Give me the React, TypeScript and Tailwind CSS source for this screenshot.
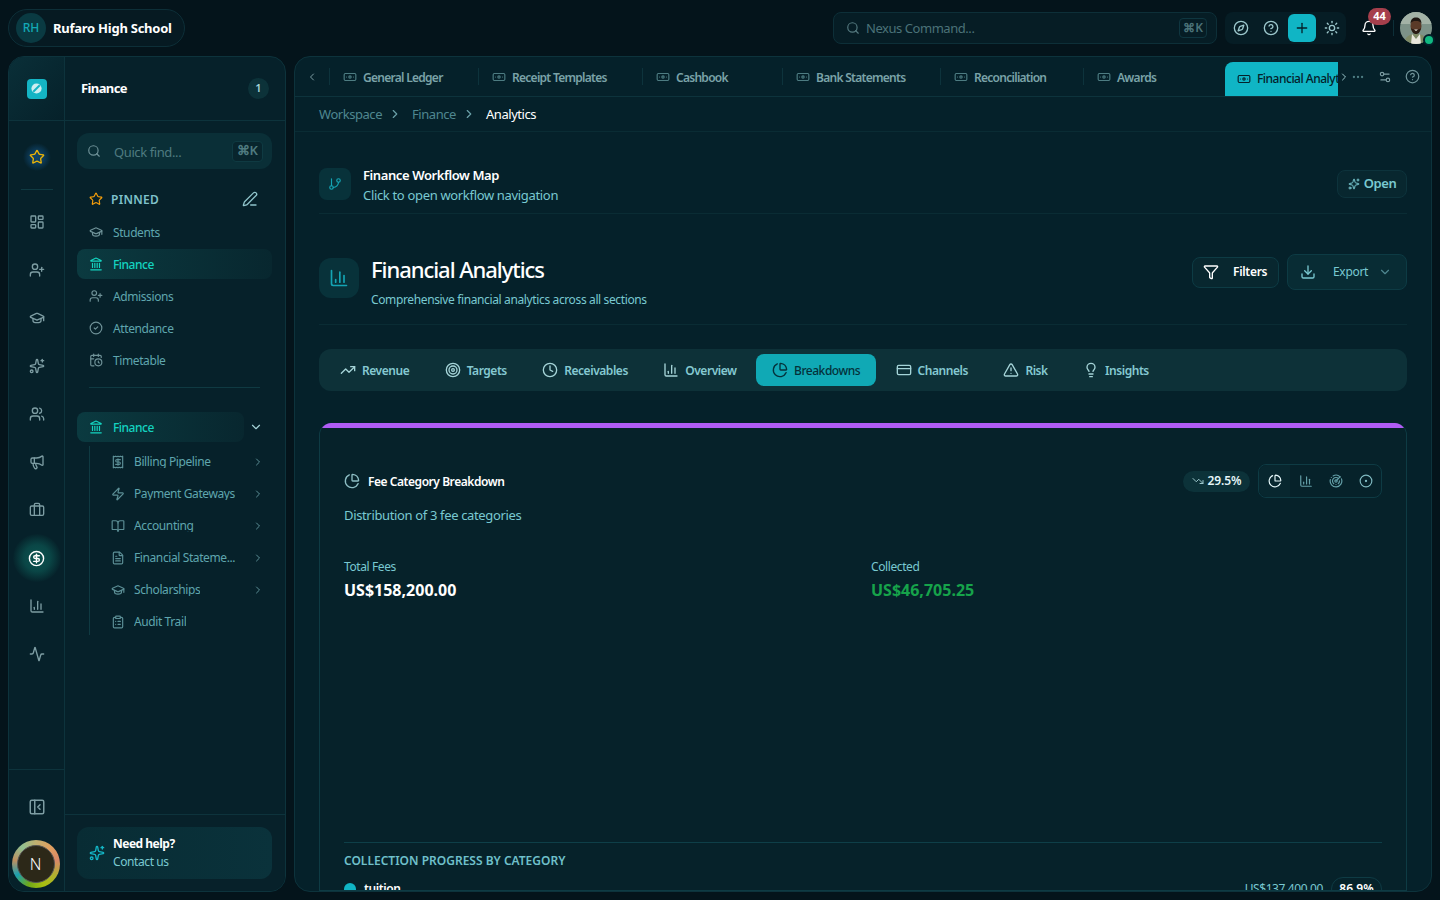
import {
  Activity, Banknote, Bell, BookOpen, Briefcase, CalendarClock, ChartColumn, ChartPie, ChevronDown, ChevronLeft, ChevronRight,
  CircleCheck, CircleDollarSign, CircleDot, CircleHelp, ClipboardList, Clock, Compass, CreditCard, Download, Ellipsis, FileText, Funnel,
  GitBranch, GraduationCap, Landmark, LayoutDashboard, Lightbulb, Megaphone, PanelLeftClose, PenLine, Plus, Radar, Receipt, Search,
  Settings2, Sparkles, Star, Sun, Target, TrendingDown, TrendingUp, TriangleAlert, UserPlus, Users, Zap,
} from "lucide-react";

const railIcons = [LayoutDashboard, UserPlus, GraduationCap, Sparkles, Users, Megaphone, Briefcase];

const pinned = [
  { label: "Students", icon: GraduationCap },
  { label: "Finance", icon: Landmark, active: true },
  { label: "Admissions", icon: UserPlus },
  { label: "Attendance", icon: CircleCheck },
  { label: "Timetable", icon: CalendarClock },
];

const financeItems = [
  { label: "Billing Pipeline", icon: Receipt, more: true },
  { label: "Payment Gateways", icon: Zap, more: true },
  { label: "Accounting", icon: BookOpen, more: true },
  { label: "Financial Stateme...", icon: FileText, more: true },
  { label: "Scholarships", icon: GraduationCap, more: true },
  { label: "Audit Trail", icon: ClipboardList },
];

const pageTabs = [
  { label: "General Ledger", w: "w-[149px]" },
  { label: "Receipt Templates", w: "w-[164px]" },
  { label: "Cashbook", w: "w-[140px]" },
  { label: "Bank Statements", w: "w-[158px]" },
  { label: "Reconciliation", w: "w-[143px]" },
  { label: "Awards", w: "w-[142px]" },
];

const sections = [
  { label: "Revenue", icon: TrendingUp },
  { label: "Targets", icon: Target },
  { label: "Receivables", icon: Clock },
  { label: "Overview", icon: ChartColumn },
  { label: "Breakdowns", icon: ChartPie, active: true },
  { label: "Channels", icon: CreditCard },
  { label: "Risk", icon: TriangleAlert },
  { label: "Insights", icon: Lightbulb },
];

function TopBar() {
  return (
    <header className="h-[56px] shrink-0 flex items-center pl-2 pr-2">
      <div className="h-[38px] w-[177px] rounded-full border border-[#0d2f38] bg-[#061a22] flex items-center pl-[7px] gap-[7px]">
        <div className="w-[30px] h-[30px] rounded-full bg-[#0a3a42] flex items-center justify-center text-[12px] font-medium text-[#13a9b5]">RH</div>
        <span className="pt-[1px] text-[13px] font-bold text-white tracking-[-0.25px]">Rufaro High School</span>
      </div>

      <div className="ml-auto h-[32px] w-[384px] rounded-lg border border-[#0d2f38] bg-[#061d25] flex items-center pl-3 pr-[9px]">
        <Search className="w-[14px] h-[14px] text-[#54797f]" />
        <span className="ml-[6px] pt-[1px] text-[13px] tracking-[-0.45px] text-[#4b7278]">Nexus Command...</span>
        <span className="ml-auto h-[20px] px-[3px] rounded border border-[#0f3640] flex items-center text-[12px] font-semibold text-[#4b7278]">⌘K</span>
      </div>

      <div className="ml-2 h-[32px] w-[121px] rounded-lg bg-[#061d25] flex items-center pl-2 gap-[8px]">
        <Compass className="w-[16px] h-[16px] text-[#9cc7cc]" />
        <CircleHelp className="w-[16px] h-[16px] ml-[6px] text-[#9cc7cc]" />
        <div className="w-[28px] h-[28px] ml-[1px] rounded-md bg-[#10b5c5] flex items-center justify-center">
          <Plus className="w-[16px] h-[16px] text-[#04212a]" />
        </div>
        <Sun className="w-[16px] h-[16px] text-[#9cc7cc]" />
      </div>

      <div className="relative ml-[15px] w-[16px] h-[16px]">
        <Bell className="w-[16px] h-[16px] text-white" />
        <span className="absolute -top-[12px] -right-[14px] w-[23px] h-[17px] rounded-full bg-[#a63f4c] text-white text-[11px] font-bold flex items-center justify-center">44</span>
      </div>
      <div className="ml-[16px] w-px h-[16px] bg-[#0d2f38]" />
      <div className="relative w-[32px] h-[32px] ml-[6px]">
        <Portrait />
        <span className="absolute -right-[3px] bottom-[-2px] w-[12px] h-[12px] rounded-full bg-[#10b981] border-2 border-[#04212a]" />
      </div>
    </header>
  );
}

function Portrait() {
  return (
    <svg viewBox="0 0 32 32" className="w-[32px] h-[32px] rounded-full">
      <rect width="32" height="32" fill="#7d9288" />
      <rect x="0" y="0" width="32" height="12" fill="#a3b2a6" />
      <path d="M4 32c1-8 6-10 12-10s11 2 12 10z" fill="#7f8a66" />
      <path d="M12 22l4 5 4-5 1 10h-10z" fill="#e8e6dc" />
      <ellipse cx="16" cy="14" rx="5.500" ry="7" fill="#5a3a28" />
      <path d="M10.500 12c0-5 2.500-6.500 5.500-6.500s5.500 1.500 5.500 6.500c-1-2.500-3-3-5.500-3s-4.500.5-5.500 3z" fill="#1f1712" />
      <path d="M11 16c1 5 3 6 5 6s4-1 5-6c-1 1.500-3 1.500-5 1.500s-4 0-5-1.500z" fill="#2a1c14" />
      <path d="M14 17.500h4l-2 1.500z" fill="#efe9e0" />
    </svg>
  );
}

function Rail() {
  return (
    <div className="w-[56px] shrink-0 border-r border-[#0d333c] flex flex-col bg-[#06212a]">
      <div className="h-[64px] shrink-0 border-b border-[#0d333c] flex items-center justify-center bg-gradient-to-br from-[#0a2f38] to-[#06212a]">
        <div className="w-[20px] h-[20px] rounded-[4px] bg-[#14b4c4] flex items-center justify-center">
          <svg viewBox="0 0 14 14" className="w-[13px] h-[13px]">
            <circle cx="7" cy="7" r="5.500" fill="#cdeef1" />
            <path d="M3.500 10.500 10.500 3.500" stroke="#14b4c4" strokeWidth="2" />
          </svg>
        </div>
      </div>
      <div className="flex flex-col items-center pt-[22px]">
        <div className="w-[28px] h-[28px] rounded-full bg-[radial-gradient(circle_closest-side,#0f4468_0%,#0c3a58_50%,#06212a_100%)] flex items-center justify-center">
          <Star className="w-[16px] h-[16px] text-[#eab308]" />
        </div>
        <div className="w-[32px] h-px bg-[#0f3a42] mt-[18px] mb-[8px]" />
        {railIcons.map((Icon, i) => (
          <div key={i} className="w-[48px] h-[48px] flex items-center justify-center">
            <Icon className="w-[16px] h-[16px] text-[#7d9da3]" />
          </div>
        ))}
        <div className="w-[48px] h-[48px] rounded-full bg-[radial-gradient(circle_closest-side,#0c5450_0%,#0a4646_55%,#06232b_100%)] flex items-center justify-center">
          <CircleDollarSign className="w-[17px] h-[17px] text-white" />
        </div>
        <div className="w-[48px] h-[48px] flex items-center justify-center">
          <ChartColumn className="w-[16px] h-[16px] text-[#7d9da3]" />
        </div>
        <div className="w-[48px] h-[48px] flex items-center justify-center">
          <Activity className="w-[16px] h-[16px] text-[#7d9da3]" />
        </div>
      </div>
      <div className="mt-auto border-t border-[#0d333c] h-[122px] flex flex-col items-center">
        <div className="mt-[28px] w-[18px] h-[18px] flex items-center justify-center">
          <PanelLeftClose className="w-[18px] h-[18px] text-[#7d9da3]" />
        </div>
        <div className="mt-[24px] -ml-[2px] w-[48px] h-[48px] rounded-full bg-[conic-gradient(#c0b070,#e0a060,#d88868,#b0b030,#a8c010,#70a818,#1aa0b0,#c09060,#90c090,#c0b070)] flex items-center justify-center">
          <div className="w-[38px] h-[38px] rounded-full bg-[#2c2818] border border-[#555] flex items-center justify-center text-white text-[16px] font-light">N</div>
        </div>
      </div>
    </div>
  );
}

function Sidebar() {
  return (
    <aside className="w-[278px] shrink-0 rounded-2xl border border-[#0d333c] bg-[#06212a] flex overflow-hidden">
      <Rail />
      <div className="flex-1 flex flex-col min-w-0">
        <div className="h-[64px] shrink-0 border-b border-[#0d333c] flex items-center pl-4 pr-4">
          <span className="text-[13px] font-bold text-white tracking-[-0.6px]">Finance</span>
          <span className="ml-auto w-[21px] h-[21px] rounded-full bg-[#0c3239] flex items-center justify-center text-[11px] font-semibold text-[#a5d4d8]">1</span>
        </div>

        <div className="flex-1 pl-3 pr-[13px] pt-3 min-h-0">
          <div className="h-[36px] rounded-xl bg-[#0a2f37] flex items-center pl-[10px] pr-[9px]">
            <Search className="w-[14px] h-[14px] text-[#6f9298]" />
            <span className="ml-[13px] pt-[4px] text-[13px] tracking-[-0.4px] text-[#4f7b80]">Quick find...</span>
            <span className="ml-auto h-[21px] px-[4px] rounded border border-[#0f3a42] bg-[#08252d] flex items-center text-[13px] font-semibold text-[#4f7b80]">⌘K</span>
          </div>

          <div className="h-[32px] mt-[14px] flex items-center pl-3 pr-[14px]">
            <Star className="w-[14px] h-[14px] text-[#f59e0b]" />
            <span className="ml-2 pt-[2px] text-[12px] font-semibold tracking-[0.3px] text-[#7fc2cb]">PINNED</span>
            <PenLine className="ml-auto w-[16px] h-[16px] text-[#8fc4cb]" />
          </div>

          <div className="flex flex-col mt-px">
            {pinned.map((item) =>
              item.active ? (
                <div key={item.label} className="h-[30px] my-px flex items-center pl-3 gap-[10px] text-[12px] tracking-[-0.5px] rounded-lg bg-gradient-to-r from-[#0b3a40] to-[#08272f] text-[#14d3c0] font-medium">
                  <item.icon className="w-[14px] h-[14px] text-[#14d3c0]" />
                  <span className="pt-[2px]">{item.label}</span>
                </div>
              ) : (
                <div key={item.label} className="h-[32px] flex items-center pl-3 gap-[10px] text-[12px] tracking-[-0.4px] text-[#5fa6ae]">
                  <item.icon className="w-[14px] h-[14px] text-[#6f9298]" />
                  <span className="pt-[2px]">{item.label}</span>
                </div>
              ),
            )}
          </div>

          <div className="h-px ml-3 mr-3 mt-[11px] bg-[#0f3a42]" />

          <div className="flex items-center mt-[24px] h-[30px]">
            <div className="w-[167px] h-[30px] rounded-lg bg-gradient-to-r from-[#0b3a40] to-[#08272f] flex items-center pl-3 gap-[10px] text-[12px] tracking-[-0.5px] font-medium text-[#14d3c0]">
              <Landmark className="w-[14px] h-[14px]" />
              <span className="pt-[1px]">Finance</span>
            </div>
            <ChevronDown className="ml-[5px] w-[14px] h-[14px] text-[#a5d4d8]" />
          </div>

          <div className="ml-3 mt-[4px] border-l border-[#0f3a42] h-[189px] flex flex-col">
            {financeItems.map((item) => (
              <div key={item.label} className="h-[32px] shrink-0 flex items-center pl-[21px] pr-[8px] text-[12px] tracking-[-0.4px] text-[#5fa6ae]">
                <item.icon className="w-[14px] h-[14px] text-[#5c8f96]" />
                <span className="ml-[9px] mb-[2px] h-[13px] leading-[13px] overflow-hidden whitespace-nowrap">{item.label}</span>
                {item.more && <ChevronRight className="ml-auto w-[12px] h-[12px] text-[#5c8f96]" />}
              </div>
            ))}
          </div>
        </div>

        <div className="h-[77px] shrink-0 border-t border-[#0d333c] pl-3 pr-[13px] pt-3 bg-[#07212a]">
          <div className="h-[52px] rounded-xl bg-gradient-to-r from-[#082c34] to-[#0a323b] flex items-center pl-3 gap-2">
            <Sparkles className="w-[16px] h-[16px] text-[#14b4c4]" />
            <div className="flex flex-col">
              <span className="text-[12px] leading-[18px] tracking-[-0.5px] font-bold text-white">Need help?</span>
              <span className="text-[12px] leading-[18px] tracking-[-0.4px] text-[#79c9d1]">Contact us</span>
            </div>
          </div>
        </div>
      </div>
    </aside>
  );
}

function PageTabs() {
  return (
    <div className="h-[40px] shrink-0 border-b border-[#0d333c] flex items-end">
      <div className="w-[34px] h-[39px] shrink-0 flex items-center justify-center">
        <ChevronLeft className="w-[12px] h-[12px] text-[#7d9da3]" />
      </div>
      <div className="w-[1009px] h-[39px] overflow-hidden flex shrink-0">
        {pageTabs.map((t) => (
          <div key={t.label} className={`${t.w} h-[39px] shrink-0 flex items-center`}>
            <div className="w-px h-[17px] bg-[#0d333c]" />
            <Banknote className="ml-[13px] w-[14px] h-[14px] text-[#4d7c82]" />
            <span className="ml-[6px] pt-[3px] text-[12px] font-semibold tracking-[-0.72px] text-[#7aa3a8] whitespace-nowrap">{t.label}</span>
          </div>
        ))}
        <div className="w-[150px] h-[34px] mt-[5px] shrink-0 rounded-t-lg bg-[#10b5c5] flex items-center pl-3">
          <Banknote className="w-[14px] h-[14px] text-[#04212a]" />
          <span className="ml-[6px] text-[12px] font-medium tracking-[-0.5px] text-[#04212a] whitespace-nowrap">Financial Analytics</span>
        </div>
      </div>
      <div className="flex-1 h-[39px] flex items-center">
        <ChevronRight className="w-[12px] h-[12px] text-[#9cc7cc]" />
        <Ellipsis className="ml-[1px] w-[14px] h-[14px] text-[#4d7c82]" />
        <Settings2 className="ml-[13px] w-[14px] h-[14px] text-[#7d9da3]" />
        <CircleHelp className="ml-[13px] w-[15px] h-[15px] text-[#6f9298]" />
      </div>
    </div>
  );
}

function FeeCard() {
  return (
    <section className="mt-[32px] rounded-t-xl border border-[#0e3b44] border-t-0 bg-[#06222a] overflow-hidden flex-1 min-h-0">
      <div className="h-[5px] bg-[#b05cf5] rounded-t-xl" />
      <div className="px-6 pt-[36px]">
        <div className="flex items-center h-[34px]">
          <ChartPie className="w-[16px] h-[16px] text-[#8dbec4]" />
          <span className="ml-2 pt-[2px] text-[12px] font-semibold tracking-[-0.45px] text-white">Fee Category Breakdown</span>
          <span className="ml-auto h-[21px] w-[67px] rounded-full bg-[#0c3239] flex items-center justify-center gap-1 text-[12px] font-semibold tracking-[-0.1px] text-[#e4f6f8]">
            <TrendingDown className="w-[12px] h-[12px] text-[#9cc7cc]" />
            29.5%
          </span>
          <div className="ml-2 h-[34px] w-[124px] rounded-lg border border-[#0e3b44] flex items-center">
            <div className="w-[31px] h-full flex items-center justify-center rounded-l-lg bg-[#08272f]">
              <ChartPie className="w-[14px] h-[14px] text-[#e4f6f8]" />
            </div>
            <div className="w-[31px] flex justify-center"><ChartColumn className="w-[14px] h-[14px] text-[#64a0a8]" /></div>
            <div className="w-[29px] flex justify-center"><Radar className="w-[14px] h-[14px] text-[#64a0a8]" /></div>
            <div className="w-[31px] flex justify-center"><CircleDot className="w-[14px] h-[14px] text-[#7fb9c0]" /></div>
          </div>
        </div>
        <p className="mt-[8px] text-[13px] leading-[18px] tracking-[-0.35px] text-[#79c9d1]">Distribution of 3 fee categories</p>

        <div className="grid grid-cols-2 gap-[16px] mt-[34px]">
          <div>
            <div className="text-[12px] leading-[18px] tracking-[-0.4px] text-[#79c9d1]">Total Fees</div>
            <div className="mt-[2px] text-[16px] leading-[24px] font-bold text-white">US$158,200.00</div>
          </div>
          <div>
            <div className="text-[12px] leading-[18px] tracking-[-0.4px] text-[#79c9d1]">Collected</div>
            <div className="mt-[2px] text-[16px] leading-[24px] font-bold text-[#16a34a]">US$46,705.25</div>
          </div>
        </div>

        <div className="mt-[240px] border-t border-[#0e3f48] pt-[9px]">
          <h3 className="text-[12px] leading-[18px] font-semibold text-[#6fc0cb]">COLLECTION PROGRESS BY CATEGORY</h3>
          <div className="mt-[7px] flex items-center">
            <span className="w-[12px] h-[12px] rounded-full bg-[#10b5c5]" />
            <span className="ml-2 text-[12px] font-semibold tracking-[-0.4px] text-white">tuition</span>
            <span className="ml-auto text-[12px] tracking-[-0.4px] text-[#79c9d1]">US$137,400.00</span>
            <span className="ml-2 h-[24px] w-[51px] rounded-full border border-[#0e3b44] flex items-center justify-center text-[12px] font-semibold text-white">86.9%</span>
          </div>
        </div>
      </div>
    </section>
  );
}

function MainPanel() {
  return (
    <main className="flex-1 min-w-0 rounded-2xl border border-[#0d333c] bg-[#05212a] overflow-hidden flex flex-col">
      <PageTabs />
      <div className="h-[35px] shrink-0 border-b border-[#0a2c34] flex items-center pl-6 text-[13px] tracking-[-0.45px]">
        <span className="pt-[2px] text-[#4f8790]">Workspace</span>
        <ChevronRight className="ml-[6px] w-[14px] h-[14px] text-[#6aa0a8]" />
        <span className="ml-[10px] pt-[2px] text-[#4f8790]">Finance</span>
        <ChevronRight className="ml-[6px] w-[14px] h-[14px] text-[#6aa0a8]" />
        <span className="ml-[10px] pt-[2px] text-white">Analytics</span>
      </div>

      <div className="flex-1 min-h-0 px-6 flex flex-col">
        <div className="h-[82px] shrink-0 border-b border-[#0a2c34] flex items-center pt-[23px]">
          <div className="w-[32px] h-[32px] rounded-lg bg-[#08323a] flex items-center justify-center">
            <GitBranch className="w-[14px] h-[14px] text-[#14a4b4]" />
          </div>
          <div className="ml-3 pt-[3px] flex flex-col">
            <span className="text-[13px] leading-[18px] font-semibold tracking-[-0.4px] text-white">Finance Workflow Map</span>
            <span className="mt-[1px] text-[13px] leading-[20px] tracking-[-0.33px] text-[#79c9d1]">Click to open workflow navigation</span>
          </div>
          <div className="ml-auto h-[28px] w-[70px] rounded-lg border border-[#0d333c] bg-[#08272f] flex items-center justify-center gap-1 text-[13px] font-semibold tracking-[-0.4px] text-[#79c9d1]">
            <Sparkles className="w-[12px] h-[12px]" />
            Open
          </div>
        </div>

        <div className="h-[111px] shrink-0 border-b border-[#0a2c34] flex items-start">
          <div className="mt-[44px] w-[40px] h-[40px] rounded-xl bg-[#08323a] flex items-center justify-center">
            <ChartColumn className="w-[20px] h-[20px] text-[#14a4b4]" />
          </div>
          <div className="ml-3 mt-[40px] flex flex-col">
            <h1 className="text-[22px] leading-[30px] font-medium text-white tracking-[-1.05px]">Financial Analytics</h1>
            <span className="mt-[7px] text-[12px] leading-[18px] tracking-[-0.37px] text-[#79c9d1]">Comprehensive financial analytics across all sections</span>
          </div>
          <div className="ml-auto mt-[40px] flex items-center gap-2">
            <div className="h-[31px] w-[87px] rounded-lg border border-[#0d3b44] bg-[#08272f] flex items-center pl-[10px] text-[12px] font-semibold tracking-[-0.3px] text-white">
              <Funnel className="w-[16px] h-[16px]" />
              <span className="ml-[14px]">Filters</span>
            </div>
            <div className="h-[36px] w-[120px] rounded-lg border border-[#0d3b44] bg-[#082c34] flex items-center pl-[12px] text-[12px] tracking-[-0.3px] text-[#79c9d1]">
              <Download className="w-[16px] h-[16px]" />
              <span className="ml-[17px]">Export</span>
              <ChevronDown className="ml-[10px] w-[14px] h-[14px] text-[#4f8790]" />
            </div>
          </div>
        </div>

        <div className="mt-[24px] h-[42px] shrink-0 rounded-xl bg-[#0d3138] flex items-center gap-[3.4px] px-[5px]">
          {sections.map((s) => (
            <div
              key={s.label}
              className={`h-[32px] px-4 flex items-center gap-[6px] text-[12px] tracking-[-0.45px] rounded-lg ${s.active ? "bg-[#10a9b5] text-[#04313a] font-medium" : "text-[#85c9d2] font-semibold"}`}
            >
              <s.icon className={`w-[16px] h-[16px] ${s.active ? "text-[#04313a]" : "text-[#a5d4d8]"}`} />
              <span className="pt-[2px]">{s.label}</span>
            </div>
          ))}
        </div>

        <FeeCard />
      </div>
    </main>
  );
}

export default function App() {
  return (
    <div className="h-[900px] w-[1440px] overflow-hidden flex flex-col bg-[#04141b] font-['Noto_Sans',sans-serif]">
      <TopBar />
      <div className="h-[836px] shrink-0 flex gap-[8px] px-2">
        <Sidebar />
        <MainPanel />
      </div>
    </div>
  );
}
